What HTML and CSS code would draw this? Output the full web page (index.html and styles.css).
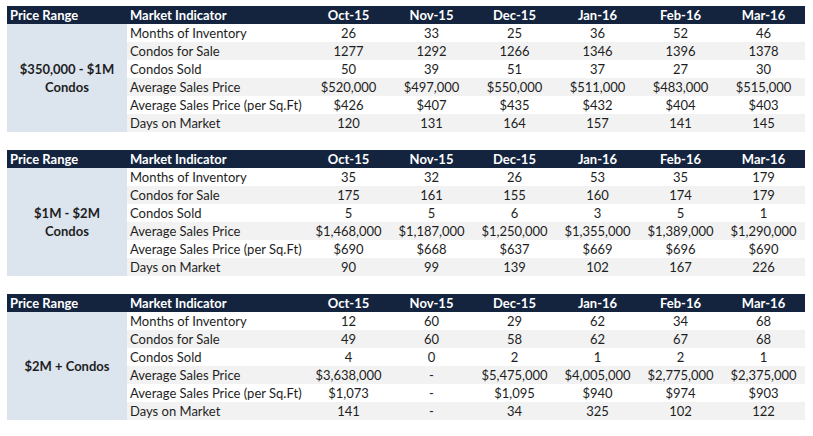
FILE: index.html
```html
<!DOCTYPE html>
<html>
<head>
<meta charset="utf-8">
<link rel="stylesheet" href="styles.css">
</head>
<body>
<div class="page">
  <table class="mt">
    <colgroup><col class="c-range"><col class="c-ind"><col class="c-m"><col class="c-m"><col class="c-m"><col class="c-m"><col class="c-m"><col class="c-m"></colgroup>
    <thead><tr><th class="l">Price Range</th><th class="l">Market Indicator</th><th>Oct-15</th><th>Nov-15</th><th>Dec-15</th><th>Jan-16</th><th>Feb-16</th><th>Mar-16</th></tr></thead>
    <tbody>
      <tr><td class="range" rowspan="6">$350,000 - $1M<br>Condos</td><td class="ind">Months of Inventory</td><td>26</td><td>33</td><td>25</td><td>36</td><td>52</td><td>46</td></tr>
      <tr class="alt"><td class="ind">Condos for Sale</td><td>1277</td><td>1292</td><td>1266</td><td>1346</td><td>1396</td><td>1378</td></tr>
      <tr><td class="ind">Condos Sold</td><td>50</td><td>39</td><td>51</td><td>37</td><td>27</td><td>30</td></tr>
      <tr class="alt"><td class="ind">Average Sales Price</td><td>$520,000</td><td>$497,000</td><td>$550,000</td><td>$511,000</td><td>$483,000</td><td>$515,000</td></tr>
      <tr><td class="ind">Average Sales Price (per Sq.Ft)</td><td>$426</td><td>$407</td><td>$435</td><td>$432</td><td>$404</td><td>$403</td></tr>
      <tr class="alt"><td class="ind">Days on Market</td><td>120</td><td>131</td><td>164</td><td>157</td><td>141</td><td>145</td></tr>
    </tbody>
  </table>
  <table class="mt">
    <colgroup><col class="c-range"><col class="c-ind"><col class="c-m"><col class="c-m"><col class="c-m"><col class="c-m"><col class="c-m"><col class="c-m"></colgroup>
    <thead><tr><th class="l">Price Range</th><th class="l">Market Indicator</th><th>Oct-15</th><th>Nov-15</th><th>Dec-15</th><th>Jan-16</th><th>Feb-16</th><th>Mar-16</th></tr></thead>
    <tbody>
      <tr><td class="range" rowspan="6">$1M - $2M<br>Condos</td><td class="ind">Months of Inventory</td><td>35</td><td>32</td><td>26</td><td>53</td><td>35</td><td>179</td></tr>
      <tr class="alt"><td class="ind">Condos for Sale</td><td>175</td><td>161</td><td>155</td><td>160</td><td>174</td><td>179</td></tr>
      <tr><td class="ind">Condos Sold</td><td>5</td><td>5</td><td>6</td><td>3</td><td>5</td><td>1</td></tr>
      <tr class="alt"><td class="ind">Average Sales Price</td><td>$1,468,000</td><td>$1,187,000</td><td>$1,250,000</td><td>$1,355,000</td><td>$1,389,000</td><td>$1,290,000</td></tr>
      <tr><td class="ind">Average Sales Price (per Sq.Ft)</td><td>$690</td><td>$668</td><td>$637</td><td>$669</td><td>$696</td><td>$690</td></tr>
      <tr class="alt"><td class="ind">Days on Market</td><td>90</td><td>99</td><td>139</td><td>102</td><td>167</td><td>226</td></tr>
    </tbody>
  </table>
  <table class="mt">
    <colgroup><col class="c-range"><col class="c-ind"><col class="c-m"><col class="c-m"><col class="c-m"><col class="c-m"><col class="c-m"><col class="c-m"></colgroup>
    <thead><tr><th class="l">Price Range</th><th class="l">Market Indicator</th><th>Oct-15</th><th>Nov-15</th><th>Dec-15</th><th>Jan-16</th><th>Feb-16</th><th>Mar-16</th></tr></thead>
    <tbody>
      <tr><td class="range" rowspan="6">$2M + Condos</td><td class="ind">Months of Inventory</td><td>12</td><td>60</td><td>29</td><td>62</td><td>34</td><td>68</td></tr>
      <tr class="alt"><td class="ind">Condos for Sale</td><td>49</td><td>60</td><td>58</td><td>62</td><td>67</td><td>68</td></tr>
      <tr><td class="ind">Condos Sold</td><td>4</td><td>0</td><td>2</td><td>1</td><td>2</td><td>1</td></tr>
      <tr class="alt"><td class="ind">Average Sales Price</td><td>$3,638,000</td><td>-</td><td>$5,475,000</td><td>$4,005,000</td><td>$2,775,000</td><td>$2,375,000</td></tr>
      <tr><td class="ind">Average Sales Price (per Sq.Ft)</td><td>$1,073</td><td>-</td><td>$1,095</td><td>$940</td><td>$974</td><td>$903</td></tr>
      <tr class="alt"><td class="ind">Days on Market</td><td>141</td><td>-</td><td>34</td><td>325</td><td>102</td><td>122</td></tr>
    </tbody>
  </table>
</div>
</body>
</html>
```

FILE: styles.css
```css
html, body {
  margin: 0;
  padding: 0;
  background: #ffffff;
}
.page {
  padding: 6px 0 0 7px;
  display: flex;
  flex-direction: column;
  gap: 18px;
  font-family: Lato, "Open Sans", sans-serif;
  font-size: 13px;
  color: #1e1e1e;
}
.mt {
  border-collapse: collapse;
  table-layout: fixed;
  width: 798px;
}
.c-range { width: 120px; }
.c-ind { width: 180px; }
.c-m { width: 83px; }
.mt th, .mt td {
  padding: 0;
  height: 18px;
  line-height: 18px;
  text-align: center;
  white-space: nowrap;
  overflow: hidden;
}
.mt th {
  background: #14243f;
  color: #ffffff;
  font-weight: bold;
}
.mt th.l {
  text-align: left;
  padding-left: 3px;
}
.mt td.ind {
  text-align: left;
  padding-left: 3px;
}
.mt tr.alt td {
  background: #f2f2f2;
}
.mt td.range, .mt tr.alt td.range {
  background: #dce4ee;
  font-weight: bold;
  line-height: 18px;
  vertical-align: middle;
}
```
